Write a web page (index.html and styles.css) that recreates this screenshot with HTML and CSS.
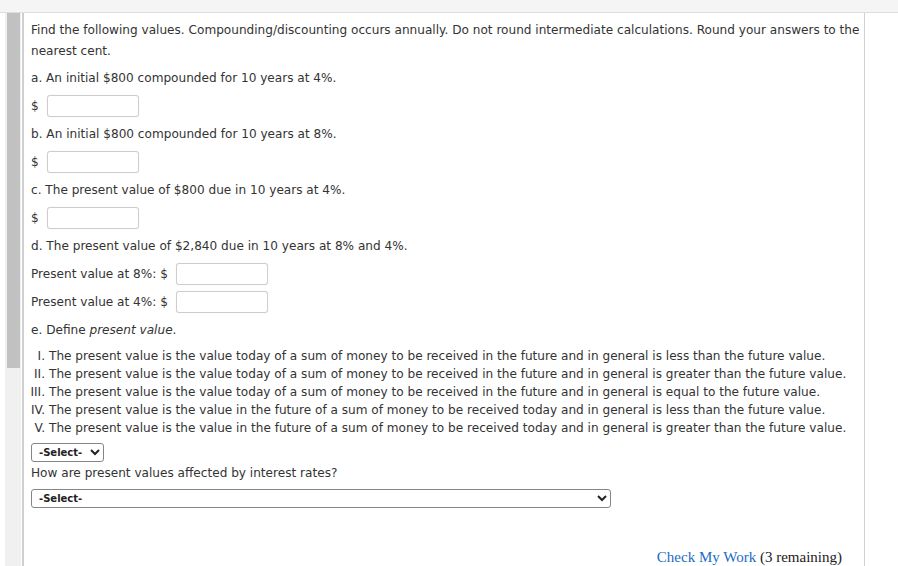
FILE: index.html
```html
<!DOCTYPE html>
<html lang="en">

<head>
    <meta charset="UTF-8">
    <title>Present Value</title>
    <link rel="stylesheet" href="styles.css">
</head>

<body>
    <div class="topbar"></div>

    <div class="page">
        <div class="gutter">
            <div class="thumb"></div>
        </div>

        <div class="panel">
            <p class="intro">Find the following values. Compounding/discounting occurs annually. Do not round intermediate calculations. Round your answers to the nearest cent.</p>

            <div class="row">a. An initial $800 compounded for 10 years at 4%.</div>
            <div class="row">$ <input type="text" class="answer"></div>

            <div class="row">b. An initial $800 compounded for 10 years at 8%.</div>
            <div class="row">$ <input type="text" class="answer"></div>

            <div class="row">c. The present value of $800 due in 10 years at 4%.</div>
            <div class="row">$ <input type="text" class="answer"></div>

            <div class="row">d. The present value of $2,840 due in 10 years at 8% and 4%.</div>
            <div class="row">Present value at 8%: $ <input type="text" class="answer"></div>
            <div class="row">Present value at 4%: $ <input type="text" class="answer"></div>

            <div class="row">e. Define <em>present value</em>.</div>

            <div class="options">
                <span class="num">I.</span><span>The present value is the value today of a sum of money to be received in the future and in general is less than the future value.</span>
                <span class="num">II.</span><span>The present value is the value today of a sum of money to be received in the future and in general is greater than the future value.</span>
                <span class="num">III.</span><span>The present value is the value today of a sum of money to be received in the future and in general is equal to the future value.</span>
                <span class="num">IV.</span><span>The present value is the value in the future of a sum of money to be received today and in general is less than the future value.</span>
                <span class="num">V.</span><span>The present value is the value in the future of a sum of money to be received today and in general is greater than the future value.</span>
            </div>

            <select class="pick pick-short">
                <option>-Select-</option>
                <option>I</option>
                <option>II</option>
                <option>III</option>
                <option>IV</option>
                <option>V</option>
            </select>

            <p class="question">How are present values affected by interest rates?</p>

            <select class="pick pick-long">
                <option>-Select-</option>
            </select>

            <div class="check">
                <a href="#" class="check-link">Check My Work</a> (3 remaining)
            </div>
        </div>

        <div class="aside"></div>
    </div>
</body>

</html>
```

FILE: styles.css
```css
html,
body {
    margin: 0;
    padding: 0;
    background-color: #fff;
}

body {
    font-family: 'DejaVu Sans', sans-serif;
    font-size: 12.1px;
    color: #333;
    height: 566px;
    overflow: hidden;
}

.topbar {
    height: 12px;
    background-color: #f5f5f5;
    border-bottom: 1px solid #dedede;
}

.page {
    display: flex;
    height: 553px;
}

/* fake scroll track on the left */
.gutter {
    width: 16px;
    margin-left: 5px;
    margin-right: 1px;
    background-color: #f0f0f0;
}

.thumb {
    height: 355px;
    margin: 0 1px 0 2px;
    background-color: #c1c1c1;
}

.panel {
    width: 833px;
    padding: 7px 0 0 7px;
    border-left: 2px solid #cfcfcf;
    border-right: 1px solid #d0d0d0;
}

.aside {
    flex: 1;
}

.intro {
    margin: 0 -6px 2px 0;
    line-height: 21px;
}

.row {
    height: 28px;
    display: flex;
    align-items: center;
    white-space: pre;
}

.answer {
    width: 92px;
    height: 22px;
    box-sizing: border-box;
    margin: 0 0 0 4px;
    padding: 0 4px;
    border: 1px solid #cdcdcd;
    border-radius: 3px;
    box-shadow: 0 0 1px rgba(0, 0, 0, 0.15);
    font: inherit;
}

.options {
    display: grid;
    grid-template-columns: 21px auto;
    column-gap: 4px;
    margin: 3px 0 0 -7px;
    line-height: 18px;
    white-space: nowrap;
}

.num {
    text-align: right;
}

.pick {
    display: block;
    height: 19px;
    box-sizing: border-box;
    margin-top: 6px;
    padding: 0 1px 0 3px;
    border: 1px solid #858585;
    border-radius: 3px;
    background-color: #fff;
    color: #222;
    font-family: 'DejaVu Sans', sans-serif;
    font-size: 10px;
    font-weight: bold;
}

.pick-short {
    width: 73px;
}

.pick-long {
    width: 580px;
    margin-top: 7px;
}

.question {
    margin: 2px 0 0;
    line-height: 18px;
}

.check {
    margin: 39px 22px 0 0;
    text-align: right;
    font-family: 'Liberation Serif', serif;
    font-size: 15px;
    line-height: 20px;
    color: #222;
    white-space: nowrap;
}

.check-link {
    color: #1a6dc2;
    text-decoration: none;
}
```
